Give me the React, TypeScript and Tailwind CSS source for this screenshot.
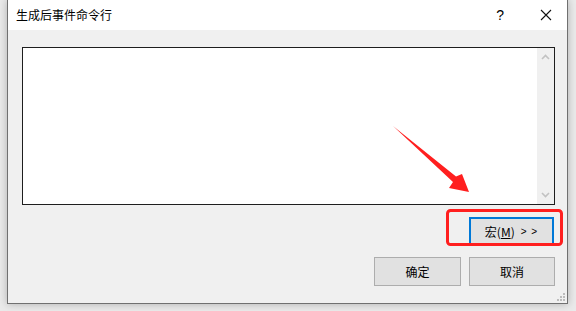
import React from 'react';

const font = { fontFamily: '"Microsoft YaHei UI", "Noto Sans CJK SC", "Liberation Sans", sans-serif' };

export default function App() {
  return (
    <div className="relative w-[576px] h-[311px] overflow-hidden bg-[#eaeaea] pl-[7px] text-[12px] text-black" style={font}>
      <div className="relative w-[561px] h-[304px] flex flex-col border border-t-0 border-[#707070] bg-[#f0f0f0] shadow-[0_0_8px_rgba(0,0,0,0.25)]">
        {/* title bar */}
        <div className="h-[30px] bg-white flex items-center pl-[8px] pr-[15px]">
          <span className="text-[12px]">生成后事件命令行</span>
          <div className="ml-auto flex items-center gap-[36px]">
            <span className="text-[14px] leading-none" style={{ fontFamily: '"Liberation Sans", sans-serif' }}>?</span>
            <svg width="12" height="12" viewBox="0 0 12 12">
              <path d="M1 1 L11 11 M11 1 L1 11" stroke="#111" strokeWidth="1.1" />
            </svg>
          </div>
        </div>

        {/* body */}
        <div className="flex-1 flex flex-col pl-[14px] pr-[12px] pt-[17px]">
          {/* command textarea */}
          <div className="h-[158px] flex border border-[#1e1e1e] bg-white">
            <div className="flex-1" />
            <div className="w-[17px] bg-[#f0f0f0] flex flex-col items-center justify-between py-[6px]">
              <svg width="9" height="6" viewBox="0 0 9 6">
                <polyline points="1,5 4.5,1.5 8,5" fill="none" stroke="#c2c2c2" strokeWidth="1.6" />
              </svg>
              <svg width="9" height="6" viewBox="0 0 9 6">
                <polyline points="1,1 4.5,4.5 8,1" fill="none" stroke="#c2c2c2" strokeWidth="1.6" />
              </svg>
            </div>
          </div>

          {/* macro button */}
          <div className="flex justify-end mt-[12px]">
            <button className="w-[85px] h-[29px] mr-[1px] border-2 border-[#0078d7] bg-[#e1e1e1] flex items-center justify-center gap-[6px] text-[12px]">
              <span>宏(<span className="underline">M</span>)</span>
              <span className="text-[10px] tracking-[1px]" style={{ fontFamily: '"Liberation Sans", sans-serif' }}>&gt; &gt;</span>
            </button>
          </div>

          {/* ok / cancel */}
          <div className="flex justify-end gap-[8px] mt-[11px]">
            <button className="w-[87px] h-[29px] border border-[#adadad] bg-[#e1e1e1] text-[12px]">确定</button>
            <button className="w-[86px] h-[29px] border border-[#adadad] bg-[#e1e1e1] text-[12px]">取消</button>
          </div>
        </div>

        {/* resize grip */}
        <svg className="absolute right-[1px] bottom-[1px]" width="10" height="10" viewBox="0 0 10 10">
          <rect x="7" y="1" width="2" height="2" fill="#bcbcbc" />
          <rect x="4" y="4" width="2" height="2" fill="#bcbcbc" />
          <rect x="7" y="4" width="2" height="2" fill="#bcbcbc" />
          <rect x="1" y="7" width="2" height="2" fill="#bcbcbc" />
          <rect x="4" y="7" width="2" height="2" fill="#bcbcbc" />
          <rect x="7" y="7" width="2" height="2" fill="#bcbcbc" />
        </svg>
      </div>

      {/* red annotation overlay */}
      <svg className="absolute inset-0 pointer-events-none" width="576" height="311" viewBox="0 0 576 311">
        <polygon points="393,126 456,176.5 462,174 469,192 449,188 453,182" fill="#ff1f1f" />
        <rect x="447.5" y="210.5" width="114" height="34" rx="3" fill="none" stroke="#ff1f1f" strokeWidth="3" />
      </svg>
    </div>
  );
}
